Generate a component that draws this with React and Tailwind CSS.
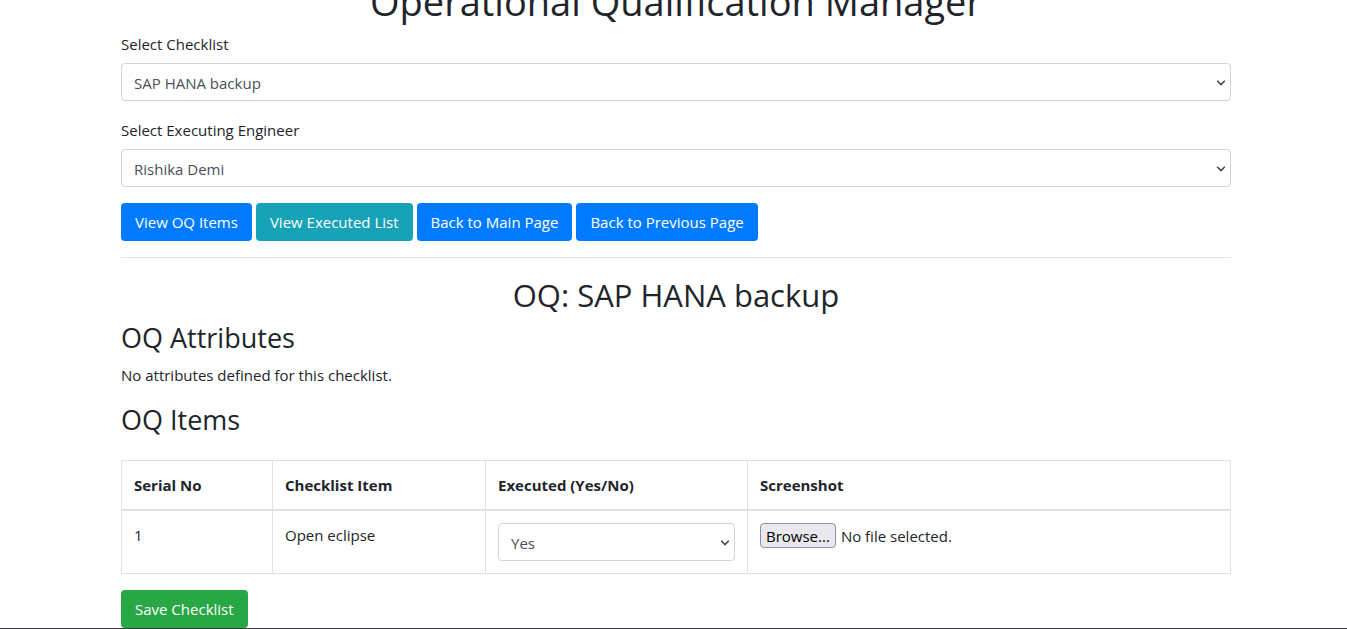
import { useState } from 'react'

const buttonBase = 'h-[38px] rounded px-[14px] text-white cursor-pointer whitespace-nowrap'

function Select({ id, label, options }) {
  const [value, setValue] = useState(options[0])
  return (
    <div className="relative">
      <select
        id={id}
        aria-label={label}
        value={value}
        onChange={(e) => setValue(e.target.value)}
        className="block h-[38px] w-full appearance-none rounded border border-[#ced4da] bg-white px-3 pt-px text-[#495057]"
      >
        {options.map((option) => (
          <option key={option}>{option}</option>
        ))}
      </select>
      <svg
        viewBox="0 0 10 6"
        className="pointer-events-none absolute top-[17px] right-[5px] h-[6px] w-[10px]"
        fill="none"
        stroke="#3f444a"
        strokeWidth="1.5"
        aria-hidden="true"
      >
        <path d="M1.2 0.8 L5 4.6 L8.8 0.8" />
      </svg>
    </div>
  )
}

function Field({ id, label, options }) {
  return (
    <div className="mb-4">
      <label htmlFor={id} className="mb-[7px] block pt-px">
        {label}
      </label>
      <Select id={id} options={options} />
    </div>
  )
}

function FilePicker({ id }) {
  const [name, setName] = useState('No file selected.')
  return (
    <div className="relative flex items-center gap-[5px]">
      <label
        htmlFor={id}
        className="flex h-[25px] items-center rounded border border-[#8f8f9d] bg-[#e9e9ed] px-[5px] text-black"
      >
        Browse...
      </label>
      <span>{name}</span>
      <input
        id={id}
        type="file"
        onChange={(e) => setName(e.target.files[0]?.name ?? 'No file selected.')}
        className="absolute inset-0 w-full cursor-pointer opacity-0"
      />
    </div>
  )
}

export default function App() {
  return (
    <div className="overflow-hidden bg-white pl-[5px] font-['Open_Sans',sans-serif] text-[15px] leading-6 text-[#212529]">
      <main className="mx-auto max-w-[1110px]">
        <h1 className="-mt-[23px] mb-[6px] text-center text-[38px] leading-[48px]">
          Operational Qualification Manager
        </h1>

        <Field id="checklist" label="Select Checklist" options={['SAP HANA backup']} />
        <Field id="engineer" label="Select Executing Engineer" options={['Rishika Demi']} />

        <div className="flex flex-wrap gap-1">
          <button type="button" className={`${buttonBase} bg-[#007bff]`}>View OQ Items</button>
          <button type="button" className={`${buttonBase} bg-[#17a2b8]`}>View Executed List</button>
          <button type="button" className={`${buttonBase} bg-[#007bff]`}>Back to Main Page</button>
          <button type="button" className={`${buttonBase} bg-[#007bff]`}>Back to Previous Page</button>
        </div>

        <hr className="mt-4 mb-[18px] border-[#e5e5e5]" />

        <h2 className="mb-[7px] text-center text-[31px] leading-[38px]">OQ: SAP HANA backup</h2>
        <h3 className="mb-2 text-[27px] leading-[34px]">OQ Attributes</h3>
        <p className="mb-4">No attributes defined for this checklist.</p>
        <h3 className="mb-[23px] text-[27px] leading-[34px]">OQ Items</h3>

        <form onSubmit={(e) => e.preventDefault()}>
          <table className="mb-4 w-full table-fixed border-collapse text-left">
            <thead>
              <tr className="[&>th]:border [&>th]:border-b-2 [&>th]:border-[#dee2e6] [&>th]:p-3 [&>th]:font-bold">
                <th className="w-[151px]">Serial No</th>
                <th className="w-[213px]">Checklist Item</th>
                <th className="w-[262px]">Executed (Yes/No)</th>
                <th>Screenshot</th>
              </tr>
            </thead>
            <tbody>
              <tr className="[&>td]:border [&>td]:border-[#dee2e6] [&>td]:p-3 [&>td]:align-top">
                <td>1</td>
                <td>Open eclipse</td>
                <td>
                  <Select id="executed-1" label="Executed" options={['Yes', 'No']} />
                </td>
                <td>
                  <FilePicker id="screenshot-1" />
                </td>
              </tr>
            </tbody>
          </table>
          <button type="submit" className={`${buttonBase} block bg-[#28a745]`}>Save Checklist</button>
        </form>
      </main>
      <div className="-ml-[5px] h-px bg-[#3a3a46]" />
    </div>
  )
}
